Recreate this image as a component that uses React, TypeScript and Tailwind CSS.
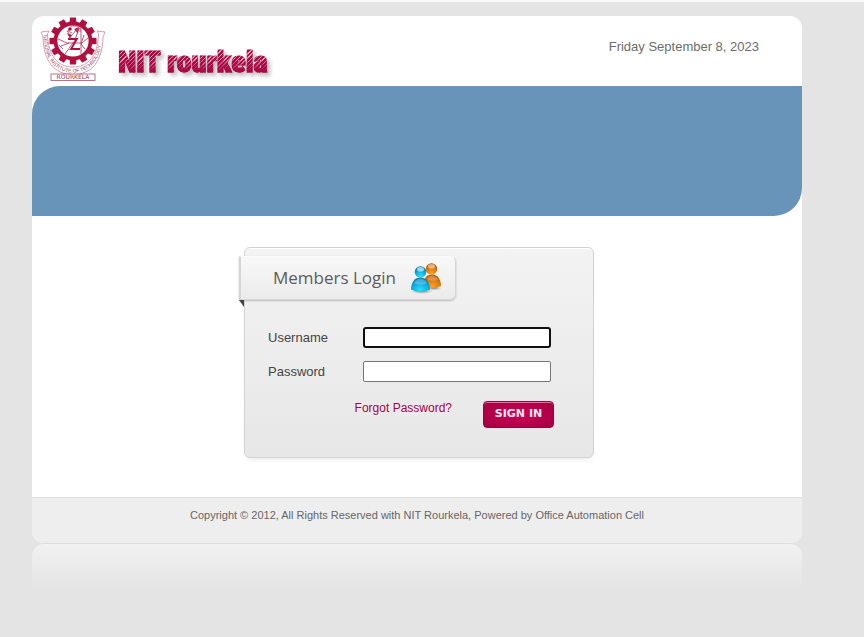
import React from "react";

const TEETH = [0, 30, 60, 90, 120, 150, 180, 210, 240, 270, 300, 330];

function Crest() {
  return (
    <svg className="h-[68px] w-[68px] shrink-0" viewBox="0 0 68 68" role="img" aria-label="National Institute of Technology Rourkela">
      <defs>
        <path id="motto" d="M4.500 19 C5 45 18 56.500 34 56.500 S63 45 63.500 17" />
      </defs>
      <g fill="none" stroke="#c9889f" strokeWidth="0.8">
        <path d="M2 16 L10 15 L8.500 18 C9 40 19 51 34 51 S59 40 59.500 18 L58 15 L66 16 L64 21 C63.500 45 53 58.500 34 58.500 S4.500 45 4 21 Z" fill="#fff" />
        <rect x="12" y="58" width="44" height="6.500" fill="#fff" stroke="#b04a6c" />
      </g>
      <g fill="#b0103f">
        {TEETH.map((a) => (
          <path key={a} d="M30.500 8 L31 1.500 H37 L37.500 8 Z" transform={`rotate(${a} 34 25)`} />
        ))}
      </g>
      <circle cx="34" cy="25" r="17.500" fill="#fff" stroke="#b0103f" strokeWidth="3.800" />
      <g fill="none" stroke="#b8446a" strokeWidth="0.9">
        <path d="M19 23 L28 27 H43 L49 22 M22 30 L30 27 M28 15 L32 20 L38 13 M26 38 L36 24 L40 12 M42 11 V38" />
        <path d="M31 10 H41 V16 M24 33 L20 29 M31 12 L29 15 L33 17 M45 19 L42 28 L46 33" />
      </g>
      <path d="M29 23 H38 L32 33 H41" fill="none" stroke="#b0103f" strokeWidth="1.800" />
      <circle cx="31" cy="13" r="1.800" fill="#b0103f" />
      <path d="M35 13 L40 11 L39 18 Z M28 17 L33 19 L31 23 Z" fill="#b0305c" />
      <text fill="#a34564" fontSize="5" fontFamily="Liberation Sans, sans-serif">
        <textPath href="#motto">NATIONAL INSTITUTE OF TECHNOLOGY</textPath>
      </text>
      <text x="34" y="63.300" textAnchor="middle" fill="#99355a" fontSize="6" fontFamily="DejaVu Sans, sans-serif">
        ROURKELA
      </text>
    </svg>
  );
}

function MembersIcon() {
  return (
    <svg className="h-8 w-8" viewBox="0 0 32 32" aria-hidden="true">
      <defs>
        <radialGradient id="orange" cx="50%" cy="85%" r="80%">
          <stop offset="0" stopColor="#f9a42c" />
          <stop offset="0.600" stopColor="#dc7608" />
          <stop offset="1" stopColor="#b85400" />
        </radialGradient>
        <radialGradient id="blue" cx="50%" cy="85%" r="80%">
          <stop offset="0" stopColor="#2be0fb" />
          <stop offset="0.600" stopColor="#0aa9dc" />
          <stop offset="1" stopColor="#0877ae" />
        </radialGradient>
        <radialGradient id="shade">
          <stop offset="0" stopColor="#444" stopOpacity="0.700" />
          <stop offset="1" stopColor="#777" stopOpacity="0" />
        </radialGradient>
      </defs>
      <ellipse cx="12" cy="29" rx="11" ry="3" fill="url(#shade)" />
      <ellipse cx="24" cy="26" rx="8" ry="2.500" fill="url(#shade)" />
      <path d="M13 25 C13 16 17 12.500 22 12.500 C28 12.500 31 18 31 24 Q22 28 13 25Z" fill="url(#orange)" />
      <circle cx="21.500" cy="7" r="5.800" fill="url(#orange)" />
      <ellipse cx="21.500" cy="4.300" rx="3.500" ry="2.300" fill="#fff" opacity="0.500" />
      <path d="M18 15 Q22 11.500 26 15 L28 18 Q22 20 17 17Z" fill="#fff" opacity="0.250" />
      <path d="M1 27.500 C1 20 5 15.500 10.500 15.500 C16 15.500 20 21 20 27.500 Q10 32 1 27.500Z" fill="url(#blue)" />
      <circle cx="10.500" cy="10" r="5.800" fill="url(#blue)" />
      <ellipse cx="10.500" cy="7.300" rx="3.500" ry="2.300" fill="#fff" opacity="0.600" />
      <path d="M6 18.500 Q10.500 14.500 15 18.500 L17 21.500 Q11 23.500 4 21.500Z" fill="#fff" opacity="0.250" />
    </svg>
  );
}

export default function App() {
  return (
    <div className="min-h-screen border-t-2 border-[#fafafa] bg-[#e4e4e4] px-8 pt-[14px] font-['Liberation_Sans',Arial,sans-serif] text-[#444]">
      <div className="w-full max-w-[770px]">
        <div className="overflow-hidden rounded-xl border-b border-[#dedede] bg-white">
          <header className="flex h-[70px] items-start pr-[43px] pl-[7px]">
            <Crest />
            <h1 className="ml-[11px] pt-[26px] font-['Roboto_Condensed','Roboto',sans-serif] text-[30px] leading-10 font-black drop-shadow-[3px_3px_2px_#bbbbbb]">
              <span className="bg-[linear-gradient(to_bottom,transparent_45%,#ab0a45_75%),repeating-linear-gradient(135deg,#ab0a45_0px,#ab0a45_2px,#e3a0b8_2px,#e3a0b8_3px)] bg-clip-text text-transparent [-webkit-text-stroke:1px_#ab0a4566]">
                NIT rourkela
              </span>
            </h1>
            <p className="ml-auto pt-[22px] text-[13px] leading-[18px] text-[#6c6c6c]">Friday September 8, 2023</p>
          </header>
          <div className="h-[130px] rounded-tl-[28px] rounded-br-[28px] bg-[#6894b9]" />
          <main className="flex justify-center pt-[31px] pb-[39px] pl-1">
            <section className="h-[211px] w-[350px] rounded-md border border-[#d2d2d2] bg-linear-to-b from-[#f3f3f3] to-[#e7e7e7] pt-2 shadow-[inset_0_1px_0_#ffffff,0_4px_4px_-2px_#eeeeee]">
              <div className="-ml-[6px] w-[217px]">
                <div className="flex h-[44px] items-center rounded-r-md border border-l-2 border-[#d6d6d6] border-t-[#fafafa] bg-linear-to-b from-[#f8f8f8] to-[#ebebeb] pl-8 shadow-[0_1px_2px_#bbbbbb]">
                  <h2 className="w-[137px] font-['Open_Sans','Noto_Sans',sans-serif] text-[17px] leading-6 text-[#5c5c5c]">Members Login</h2>
                  <MembersIcon />
                </div>
                <svg className="block h-[7px] w-[5px]" viewBox="0 0 5 7" aria-hidden="true">
                  <path d="M0 0H5V7Z" fill="#444" />
                </svg>
              </div>
              <form className="pt-5 pr-[39px] pl-[23px]" onSubmit={(e) => e.preventDefault()}>
                <div className="grid grid-cols-[95px_1fr] items-center gap-y-[13px] text-[13px]">
                  <label htmlFor="username">Username</label>
                  <input id="username" autoFocus autoComplete="off" className="h-[21px] w-[188px] rounded-[3px] border-2 border-[#101010] bg-white px-[2px] text-[13px] caret-black outline-none" />
                  <label htmlFor="password">Password</label>
                  <input id="password" type="password" className="h-[21px] w-[188px] rounded-[2px] border border-[#767676] bg-white px-[2px] text-[13px] outline-none" />
                </div>
                <div className="mt-[19px] flex items-start justify-end gap-[31px]">
                  <a href="#forgot" className="text-[12px] leading-[14px] text-[#a0064a]">Forgot Password?</a>
                  <button className="h-[27px] w-[71px] rounded-[4px] border border-[#8d0740] bg-[radial-gradient(ellipse_at_center,#cc0059_0%,#a3003f_100%)] font-['DejaVu_Sans',sans-serif] text-[11px] font-bold text-[#ffe8f2] shadow-[inset_0_1px_0_#d87a9f]">
                    SIGN IN
                  </button>
                </div>
              </form>
            </section>
          </main>
          <footer className="h-[46px] border-t border-[#dedede] bg-[#eeeeee] pt-[10px] text-center text-[11px] leading-[14px] text-[#666]">
            Copyright © 2012, All Rights Reserved with NIT Rourkela, Powered by Office Automation Cell
          </footer>
        </div>
        <div className="h-[46px] rounded-t-xl bg-linear-to-b from-[#f1f1f1] to-[#e4e4e4]" />
      </div>
    </div>
  );
}
